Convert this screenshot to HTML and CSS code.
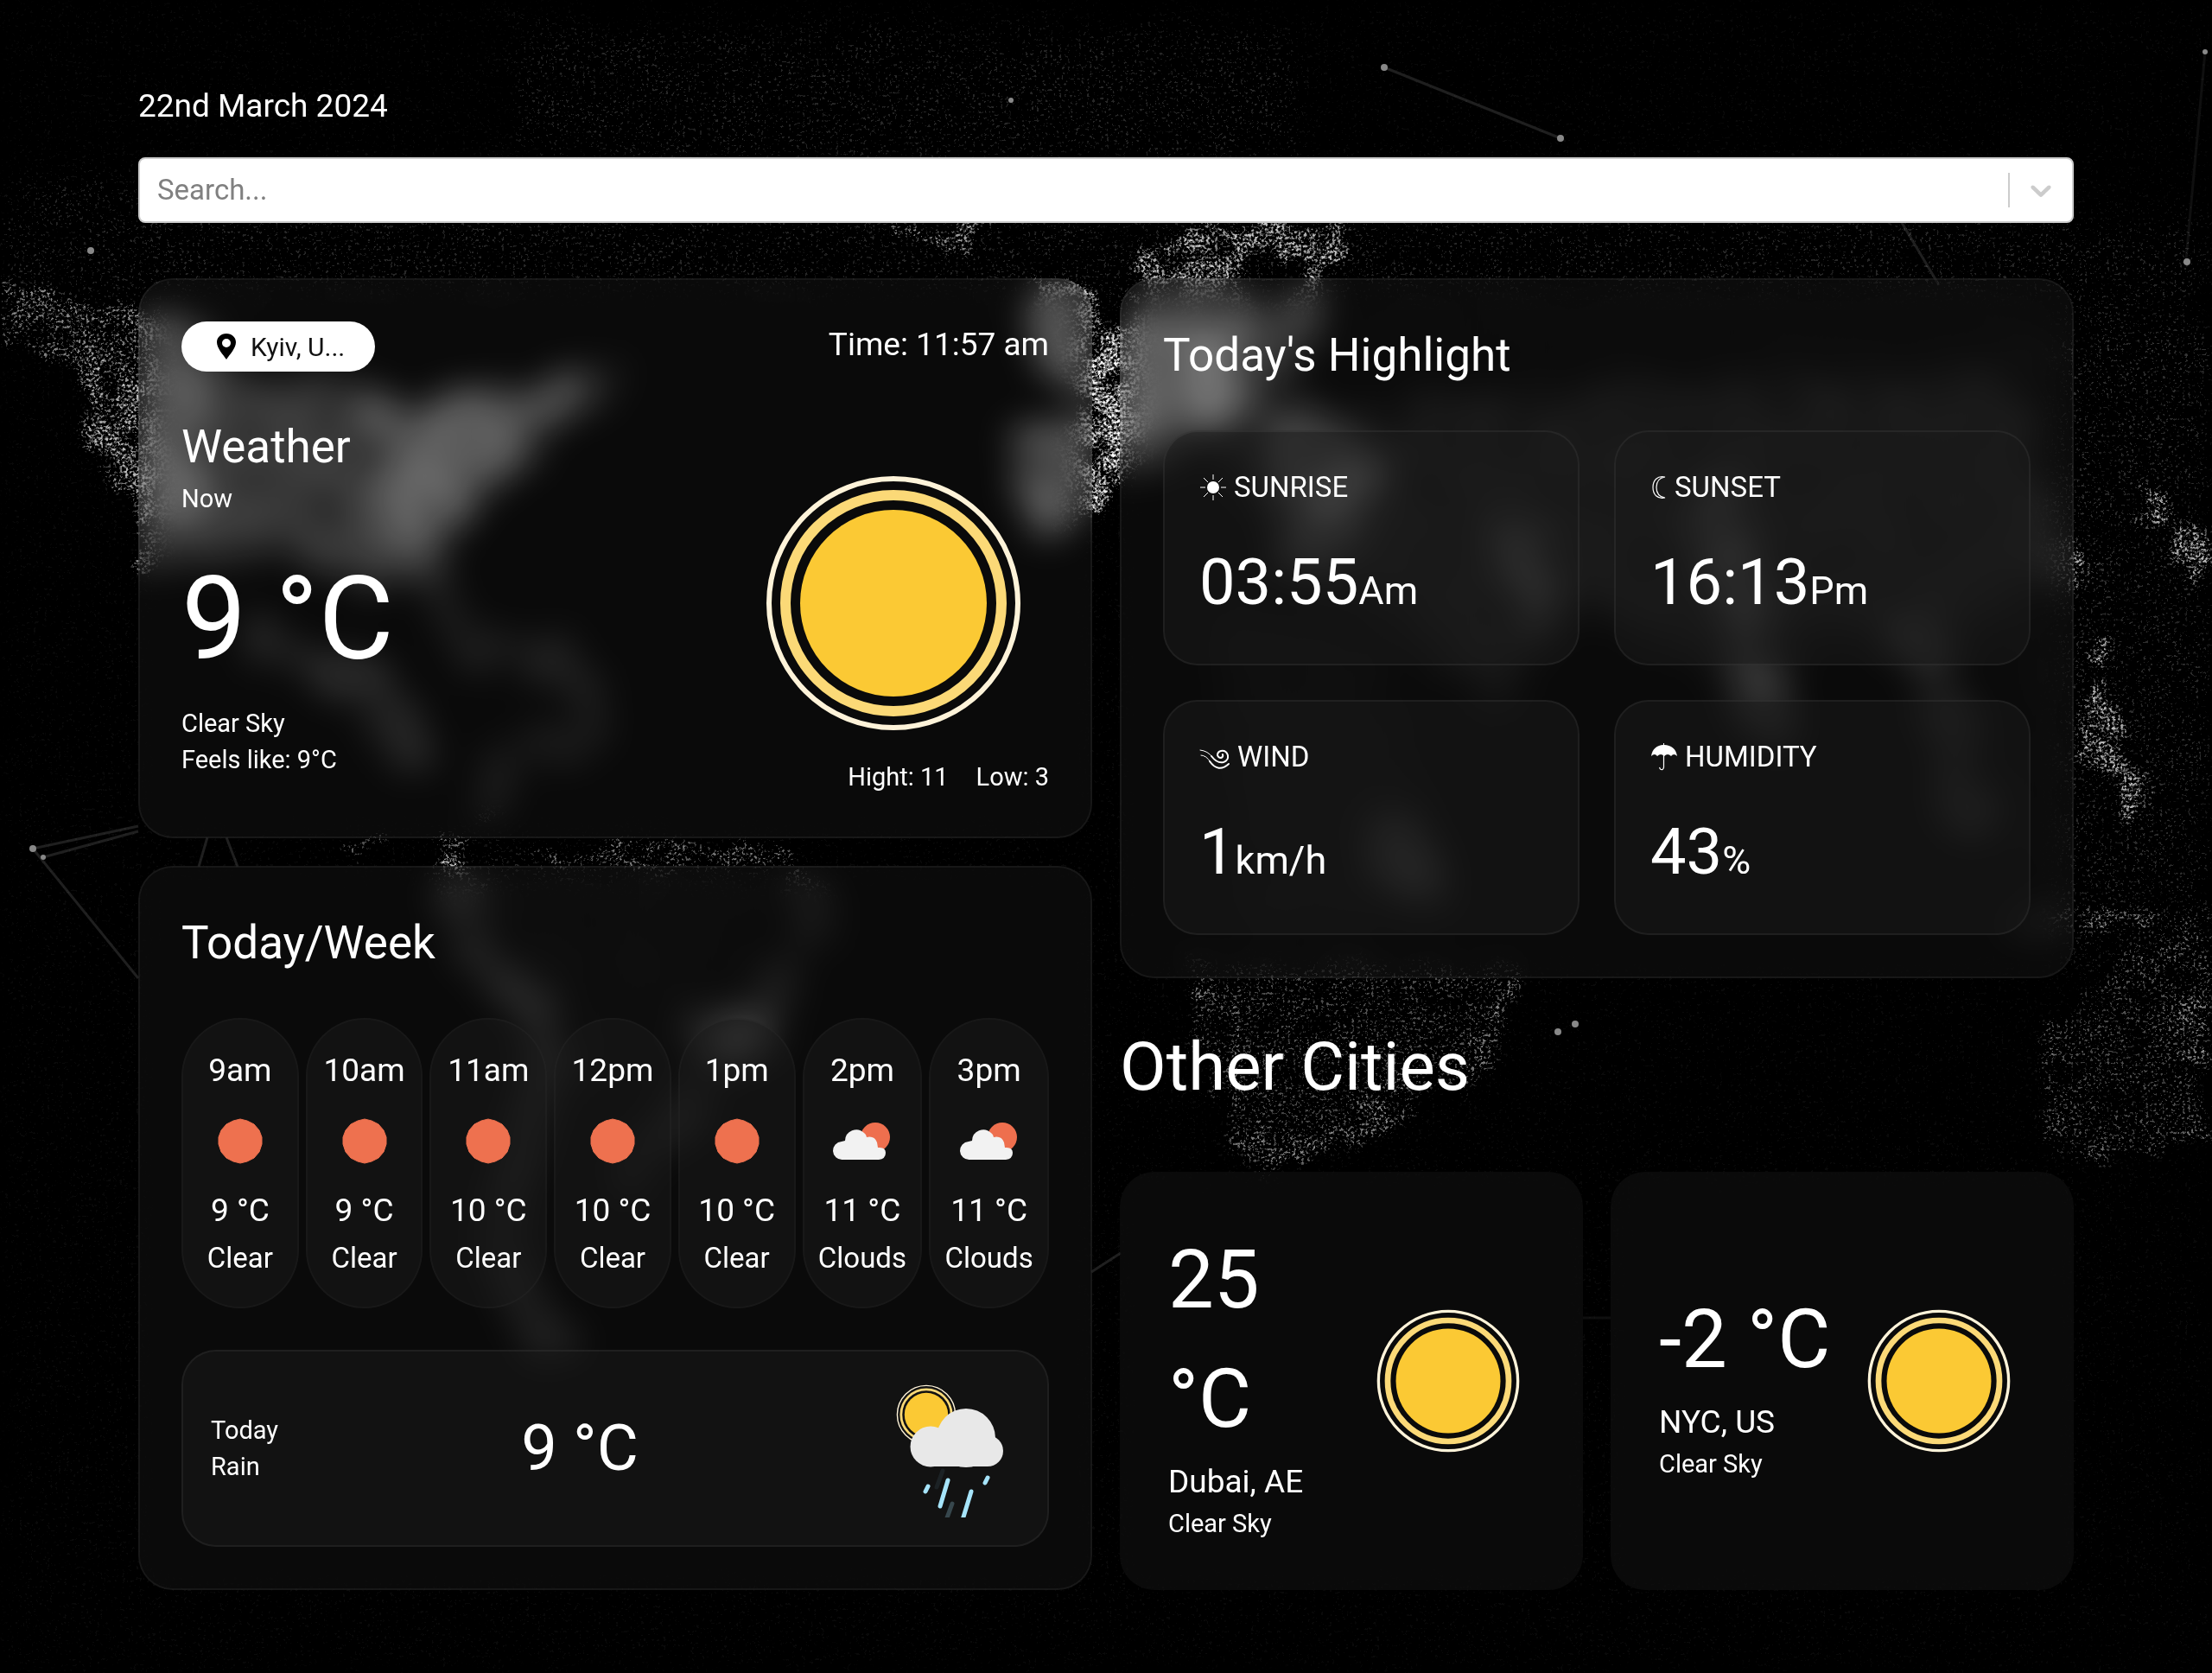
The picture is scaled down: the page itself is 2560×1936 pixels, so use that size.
FILE: index.html
```html
<!DOCTYPE html>
<html lang="en">
<head>
<meta charset="utf-8">
<meta name="viewport" content="width=device-width, initial-scale=1">
<title>Weather</title>
<link rel="stylesheet" href="styles.css">
</head>
<body>
<svg class="backdrop" viewBox="0 0 2560 1936" preserveAspectRatio="xMidYMid slice" aria-hidden="true">
  <defs>
    <filter id="speckle" filterUnits="userSpaceOnUse" x="0" y="0" width="2560" height="1936" color-interpolation-filters="sRGB">
      <feTurbulence type="fractalNoise" baseFrequency="0.025" numOctaves="5" seed="4" result="coast"/>
      <feDisplacementMap in="SourceGraphic" in2="coast" scale="60" xChannelSelector="R" yChannelSelector="G" result="shape"/>
      <feGaussianBlur in="shape" stdDeviation="3" result="soft"/>
      <feTurbulence type="fractalNoise" baseFrequency="0.035" numOctaves="4" seed="27"/>
      <feColorMatrix values="0 0 0 0 1  0 0 0 0 1  0 0 0 0 1  3.6 0 0 0 -0.9" result="patches"/>
      <feComposite in="soft" in2="patches" operator="in" result="patchy"/>
      <feComposite in="soft" in2="patchy" operator="arithmetic" k1="0" k2=".45" k3=".75" k4="0" result="land"/>
      <feTurbulence type="fractalNoise" baseFrequency="0.31" numOctaves="4" seed="11"/>
      <feColorMatrix values="0 0 0 0 1  0 0 0 0 1  0 0 0 0 1  2.6 1 0 0 -1.35" result="grain"/>
      <feComposite in="land" in2="grain" operator="arithmetic" k1="0" k2="1" k3="1" k4="-1"/>
    </filter>
    <filter id="smooth" filterUnits="userSpaceOnUse" x="0" y="0" width="2560" height="1936"><feGaussianBlur stdDeviation="14"/></filter>
    <g id="sun">
      <circle cx="150" cy="150" r="144" fill="none" stroke="#fef3d9" stroke-width="6"/>
      <circle cx="150" cy="150" r="125" fill="none" stroke="#fbd977" stroke-width="12"/>
      <circle cx="150" cy="150" r="108" fill="#fbc934"/>
    </g>
    <g id="clear-hour"><path d="M50 25 58 27 66 31 72 38 75 46v8l-3 9-6 7-8 4-8 2-8-2-8-4-6-7-3-9v-8l3-8 6-7 8-4z" fill="#ee714f" stroke="#ee714f" stroke-width="1" stroke-linejoin="round"/></g>
    <g id="cloudy-hour">
      <circle cx="65" cy="46" r="17" fill="#ee6f4e"/>
      <path d="M27 72a10 10 0 0 1-1-21l4-1a13 13 0 0 1 22-9q3 2 3 5 9-2 12 6l1 6q9-1 9 6t-8 8z" fill="#f2f2f2"/>
    </g>
  </defs>
  <rect width="2560" height="1936"/>
  <g filter="url(#speckle)" fill="#fff">
    <g filter="url(#smooth)">
      <path d="M0 210H1300V350H0zM1300 250H2560V420H1300zM600 40H1500V180H600z" opacity=".1"/>
      <path d="M2330 400H2560V1120H2400L2330 1000z" opacity=".12"/>
      <path d="M0 0H2560V1936H0z" opacity=".03"/>
      <path d="M520 990H900L880 1130 760 1250 660 1280 620 1190z" opacity=".14"/>
      <path d="M1380 500 1700 450 2330 420 2400 640 2260 760 2100 720 2030 850 1960 760 1800 700 1740 840 1660 760 1500 650z" opacity=".34"/>
      <path d="M1400 700 1600 740 1700 1060 1440 1080z" opacity=".18"/>
    </g>
    <path d="M0 330 90 360 170 350 260 380 240 500 260 600 170 620 130 560 100 500 96 440 30 400 0 390z" opacity=".42"/>
    <path d="M100 400 180 460 240 580 200 625 130 560 95 500z" opacity=".3"/>
    <path d="M170 360 260 420 430 440 500 480 610 440 690 430 680 470 620 510 580 570 520 620 510 660 430 690 330 640 160 660z" opacity=".6"/>
    <path d="M420 460 620 460 580 540 500 640 440 640z" opacity=".6"/>
    <path d="M600 440 740 410 730 450 630 490z" opacity=".3"/>
    <g fill="none" stroke="#fff" stroke-linecap="round" stroke-linejoin="round">
      <path d="M490 640 520 710M540 745 660 770 690 810 680 850 580 880 560 930" stroke-width="40" opacity=".4"/>
      <path d="M300 740 420 790 480 870" stroke-width="50" opacity=".5"/>
      <path d="M520 1010 560 1110 635 1190 620 1290 595 1350 575 1450 640 1560" stroke-width="46" opacity=".44"/>
      <path d="M930 1030 950 1060 910 1140 850 1200 800 1280 730 1350" stroke-width="46" opacity=".4"/>
      <path d="M820 1195H890" stroke-width="50" opacity=".4"/>
      <path d="M1500 650 1560 560M1750 620 1790 700M1990 590 2020 700 2050 840M2220 740 2260 840 2280 950M1600 960 1640 1010" stroke-width="60" opacity=".42"/>
    </g>
    <path d="M400 975 440 970 450 990 390 990zM520 965H550L540 1005H510zM600 985 720 980 920 975V1000H600z" opacity=".36"/>
    <path d="M1190 320 1260 340 1290 420 1300 500 1270 600 1230 620 1170 590 1180 500 1250 480 1190 420z" opacity=".78"/>
    <path fill-rule="evenodd" d="M1320 300 1400 260 1560 255 1540 320 1500 430 1420 480 1350 540 1290 560 1260 480 1320 400zM1440 320a30 30 0 1 0 60 0 30 30 0 1 0-60 0z" opacity=".6"/>
    <path d="M1280 370H1440V500H1290z" opacity=".72"/>
    <path d="M1440 450 1560 480 1600 560 1560 640 1480 600z" opacity=".48"/>
    <path d="M1040 258H1160L1120 290 1060 280z" opacity=".45"/>
    <path d="M2300 1050 2500 1058 2480 1074 2330 1076z" opacity=".35"/>
    <path d="M1370 1110 1770 1120 1720 1230 1640 1280 1590 1320 1500 1345 1430 1330 1420 1230z" opacity=".24"/>
    <path d="M1375 1110 1405 1130 1450 1270 1460 1325 1550 1310 1620 1230 1640 1250 1570 1330 1470 1350 1430 1340 1410 1290zM1740 1130 1760 1130 1730 1230 1700 1280 1690 1230z" opacity=".26"/>
    <path d="M2475 560 2510 570 2515 620 2480 620zM2510 630 2560 590V650L2535 670zM2415 730 2440 720 2435 770 2415 770zM2420 800 2440 800 2450 860 2485 920 2470 950 2410 870zM2390 630 2440 640 2420 690 2390 690z" opacity=".55"/>
    <path d="M2360 1200 2420 1160 2470 1100 2560 1060V1330L2470 1310 2390 1350 2380 1270z" opacity=".24"/>
    <path d="M2355 1200 2370 1200 2392 1325 2560 1305V1325L2400 1350 2370 1320zM2510 1170 2560 1140V1230L2530 1230z" opacity=".26"/>
  </g>
  <g stroke="#fff" stroke-opacity=".12" stroke-width="3" fill="none">
    <path d="M1602 78 1806 160M2200 256 2244 330M38 982 160 956M38 982 160 1132M50 992 160 962M262 969 275 1003M240 969 230 1003M1263 1472 1297 1450"/>
    <path d="M1832 1525H1864M2552 60 2530 300" stroke-opacity=".06"/>
  </g>
  <g fill="#888">
    <circle cx="1602" cy="78" r="4"/><circle cx="1806" cy="160" r="4"/><circle cx="38" cy="982" r="4"/><circle cx="50" cy="992" r="3"/><circle cx="105" cy="290" r="4"/><circle cx="1170" cy="116" r="3"/><circle cx="1803" cy="1194" r="4"/><circle cx="1823" cy="1185" r="4"/><circle cx="2531" cy="303" r="4"/><circle cx="2552" cy="60" r="3"/>
  </g>
</svg>

<main class="page">
  <p class="date">22nd March 2024</p>
  <form class="search">
    <input class="search-input" type="text" placeholder="Search..." aria-label="Search for a city">
    <button class="search-toggle" type="button" aria-label="Open the city list">
      <svg width="40" height="40" viewBox="0 0 20 20" aria-hidden="true"><path fill="currentColor" d="M4.516 7.548c0.436-0.446 1.043-0.481 1.576 0l3.908 3.747 3.908-3.747c0.533-0.481 1.141-0.446 1.574 0 0.436 0.445 0.408 1.197 0 1.615-0.406 0.418-4.695 4.502-4.695 4.502-0.217 0.223-0.502 0.335-0.787 0.335s-0.57-0.112-0.789-0.335c0 0-4.287-4.084-4.695-4.502s-0.436-1.17 0-1.615z"/></svg>
    </button>
  </form>

  <div class="columns">
    <div class="column">
      <section class="card">
        <div class="now-top">
          <div class="place">
            <svg width="24" height="32" viewBox="0 0 24 32" aria-hidden="true"><path fill-rule="evenodd" d="M12 1C5.500 1 1 5.500 1 11c0 7 7 14 11 20 4-6 11-13 11-20C23 5.500 18.500 1 12 1zm0 6a5 5 0 1 1 0 10 5 5 0 0 1 0-10z"/></svg>
            <span>Kyiv, U...</span>
          </div>
          <p class="text-m">Time: 11:57 am</p>
        </div>
        <div class="now-body">
          <div class="now-left">
            <h2 class="title">Weather</h2>
            <p class="text-s">Now</p>
            <p class="now-temp">9 °C</p>
            <p class="text-s">Clear Sky</p>
            <p class="text-s">Feels like: 9°C</p>
          </div>
          <div class="now-right">
            <svg class="now-sun" viewBox="0 0 300 300" role="img" aria-label="Clear sky"><use href="#sun"/></svg>
            <p class="range text-s"><span>Hight: 11</span><span>Low: 3</span></p>
          </div>
        </div>
      </section>

      <section class="card">
        <h2 class="title">Today/Week</h2>
        <ul class="hours">
          <li class="hour"><span class="text-m">9am</span><svg class="hour-icon" viewBox="0 0 100 100" aria-hidden="true"><use href="#clear-hour"/></svg><span class="text-m">9 °C</span><span class="hour-sky">Clear</span></li>
          <li class="hour"><span class="text-m">10am</span><svg class="hour-icon" viewBox="0 0 100 100" aria-hidden="true"><use href="#clear-hour"/></svg><span class="text-m">9 °C</span><span class="hour-sky">Clear</span></li>
          <li class="hour"><span class="text-m">11am</span><svg class="hour-icon" viewBox="0 0 100 100" aria-hidden="true"><use href="#clear-hour"/></svg><span class="text-m">10 °C</span><span class="hour-sky">Clear</span></li>
          <li class="hour"><span class="text-m">12pm</span><svg class="hour-icon" viewBox="0 0 100 100" aria-hidden="true"><use href="#clear-hour"/></svg><span class="text-m">10 °C</span><span class="hour-sky">Clear</span></li>
          <li class="hour"><span class="text-m">1pm</span><svg class="hour-icon" viewBox="0 0 100 100" aria-hidden="true"><use href="#clear-hour"/></svg><span class="text-m">10 °C</span><span class="hour-sky">Clear</span></li>
          <li class="hour"><span class="text-m">2pm</span><svg class="hour-icon" viewBox="0 0 100 100" aria-hidden="true"><use href="#cloudy-hour"/></svg><span class="text-m">11 °C</span><span class="hour-sky">Clouds</span></li>
          <li class="hour"><span class="text-m">3pm</span><svg class="hour-icon" viewBox="0 0 100 100" aria-hidden="true"><use href="#cloudy-hour"/></svg><span class="text-m">11 °C</span><span class="hour-sky">Clouds</span></li>
        </ul>
        <div class="tile today">
          <div class="text-s"><p>Today</p><p>Rain</p></div>
          <p class="value">9 °C</p>
          <svg class="today-icon" viewBox="0 0 160 160" role="img" aria-label="Rain">
            <svg x="17" y="6" width="70" height="70" viewBox="0 0 300 300"><use href="#sun"/></svg>
            <g fill="#e8e8e8"><circle cx="57" cy="78" r="23.500"/><circle cx="98" cy="68" r="34"/><circle cx="123" cy="83" r="18"/><path d="M57 70H123V101H57z"/></g>
            <g stroke-width="5" stroke-linecap="round">
              <path stroke="#1c2225" d="M71 106 64 125"/><path stroke="#37474d" d="M82 144 74 166"/>
              <path stroke="#a6e4fa" d="M54 124 51 130M77 117 68 147M104 130 93 166M123 114 120 120"/>
            </g>
          </svg>
        </div>
      </section>
    </div>

    <div class="column column-end">
      <section class="card">
        <h2 class="title">Today's Highlight</h2>
        <div class="stats">
          <div class="tile stat">
            <h3 class="stat-name"><svg width="32" height="32" viewBox="0 0 32 32" aria-hidden="true"><circle cx="16" cy="16" r="7" fill="#fff"/><path stroke="#fff" d="M16 1V7M16 25V31M1 16H7M25 16H31M5 5 10 10M22 22 27 27M27 5 22 10M10 22 5 27"/></svg>SUNRISE</h3>
            <p class="value">03:55<small class="unit">Am</small></p>
          </div>
          <div class="tile stat">
            <h3 class="stat-name"><svg width="20" height="32" viewBox="0 0 20 32" aria-hidden="true"><path fill="none" stroke="#fff" stroke-width="1.200" d="M17 4C8 2 3 8 3 16s5 14 14 12C10 27 7 22 7 16S10 5 17 4z"/></svg>SUNSET</h3>
            <p class="value">16:13<small class="unit">Pm</small></p>
          </div>
          <div class="tile stat">
            <h3 class="stat-name"><svg width="36" height="32" viewBox="0 0 36 32" aria-hidden="true"><g fill="none" stroke="#fff" stroke-linecap="round"><path stroke-width="1" d="M1 8q9 1 14 8"/><path stroke-width="2" d="M14 15q7 9 14 7 6-2 5-8-2-6-8-5-4 1-4 5 1 3 4 3 3-1 2-4"/><path stroke-width="1" d="M2 14q6 0 11 8"/><path stroke-width="2" d="M12 21q10 14 22 3"/></g></svg>WIND</h3>
            <p class="value">1<small class="unit">km/h</small></p>
          </div>
          <div class="tile stat">
            <h3 class="stat-name"><svg width="32" height="32" viewBox="0 0 32 32" aria-hidden="true"><path fill="#fff" d="M1 15C2 7 8 2 15 2V0h1V2c8 0 14 5 15 13q-4-4-7 0-4-4-8 0-4-4-8 0-3-4-7 0z"/><path fill="none" stroke="#fff" stroke-width="1.200" d="M15.500 13V28q-1 4-4 2l-1-2"/></svg>HUMIDITY</h3>
            <p class="value">43<small class="unit">%</small></p>
          </div>
        </div>
      </section>

      <h1 class="cities-title">Other Cities</h1>
      <div class="cities">
        <article class="city">
          <div class="city-text"><p class="city-temp">25 °C</p><h3 class="text-m">Dubai, AE</h3><p class="text-s">Clear Sky</p></div>
          <svg class="city-sun" viewBox="0 0 300 300" role="img" aria-label="Clear sky"><use href="#sun"/></svg>
        </article>
        <article class="city">
          <div class="city-text"><p class="city-temp">-2 °C</p><h3 class="text-m">NYC, US</h3><p class="text-s">Clear Sky</p></div>
          <svg class="city-sun" viewBox="0 0 300 300" role="img" aria-label="Clear sky"><use href="#sun"/></svg>
        </article>
      </div>
    </div>
  </div>
</main>
</body>
</html>
```
FILE: styles.css
```css
*, *::before, *::after { box-sizing: border-box; }

body {
  margin: 0;
  background: #000;
  color: #fff;
  font-family: Roboto, "Open Sans", sans-serif;
  line-height: 1.5;
}

h1, h2, h3, p, ul { margin: 0; padding: 0; font-weight: 400; }
ul { list-style: none; }
svg { display: block; flex: none; }

.backdrop { position: fixed; inset: 0; width: 100%; height: 100%; z-index: -1; }

.page { padding: 96px 160px; }

.text-s { font-size: 29px; line-height: 42px; }
.text-m { font-size: 37px; line-height: 54px; }
.title { font-size: 53px; line-height: 78px; }
.value { font-size: 74px; line-height: 108px; }
.unit { font-size: 45px; line-height: 1; }

.date { font-size: 37px; line-height: 54px; }

.search {
  display: flex;
  align-items: center;
  height: 76px;
  margin: 32px 0 64px;
  background: #fff;
  border: 2px solid #ccc;
  border-radius: 8px;
}
.search-input {
  flex: 1;
  min-width: 0;
  padding: 0 20px;
  border: 0;
  background: none;
  color: #333;
  font: inherit;
  font-size: 33px;
}
.search-input::placeholder { color: #808080; opacity: 1; }
.search-toggle {
  padding: 0 16px;
  border: 0;
  border-left: 2px solid #ccc;
  background: none;
  color: #ccc;
}

.columns { display: grid; grid-template-columns: 1fr 1fr; gap: 32px; }
.column { display: flex; flex-direction: column; gap: 32px; min-width: 0; }
.column-end { gap: 0; }

.card {
  padding: 48px;
  border: 2px solid rgba(255, 255, 255, .09);
  border-radius: 40px;
  background: rgba(255, 255, 255, .04);
  background-clip: padding-box;
  backdrop-filter: blur(20px);
}
.tile {
  border: 2px solid rgba(255, 255, 255, .06);
  border-radius: 40px;
  background: rgba(26, 26, 26, .5);
}

.now-top { display: flex; justify-content: space-between; align-items: flex-start; }
.place {
  display: flex;
  align-items: center;
  gap: 16px;
  min-width: 224px;
  height: 58px;
  padding: 0 32px 0 40px;
  border-radius: 29px;
  background: #fff;
  color: #111;
  font-size: 30px;
}
.now-body { display: flex; justify-content: space-between; margin-top: 48px; }
.now-left { padding-bottom: 20px; }
.now-temp { margin-top: 20px; font-size: 134px; line-height: 198px; }
.now-right { display: flex; flex-direction: column; align-items: flex-end; justify-content: flex-end; }
.now-sun { width: 300px; height: 300px; margin: 0 30px 30px; }
.range { display: flex; gap: 32px; }

.hours { display: grid; grid-template-columns: repeat(5, 135fr) repeat(2, 138fr); gap: 8px; margin: 48px 0; }
.hour {
  display: flex;
  flex-direction: column;
  align-items: center;
  padding: 32px 0;
  border: 2px solid rgba(255, 255, 255, .03);
  border-radius: 80px;
  background: rgba(26, 26, 26, .5);
}
.hour-icon { width: 100px; height: 100px; margin: 4px 0; }
.hour-sky { margin-top: 4px; font-size: 33px; line-height: 48px; }

.today { display: flex; align-items: center; justify-content: space-between; padding: 32px; }
.today-icon { width: 160px; height: 160px; }

.stats { display: grid; grid-template-columns: 1fr 1fr; gap: 40px; margin-top: 48px; }
.stat { padding: 40px; }
.stat-name { display: flex; align-items: center; gap: 8px; margin-bottom: 32px; font-size: 33px; line-height: 48px; }

.cities-title { margin: 46px 0 64px; font-size: 78px; line-height: 114px; }
.cities { display: grid; grid-template-columns: 1fr 1fr; gap: 32px; flex: 1; }
.city {
  display: flex;
  align-items: center;
  justify-content: space-between;
  gap: 24px;
  padding: 56px 72px 56px 56px;
  border-radius: 40px;
  background: rgba(255, 255, 255, .04);
  backdrop-filter: blur(20px);
}
.city-temp { font-size: 94px; line-height: 138px; }
.city-sun { width: 168px; height: 168px; }
```
